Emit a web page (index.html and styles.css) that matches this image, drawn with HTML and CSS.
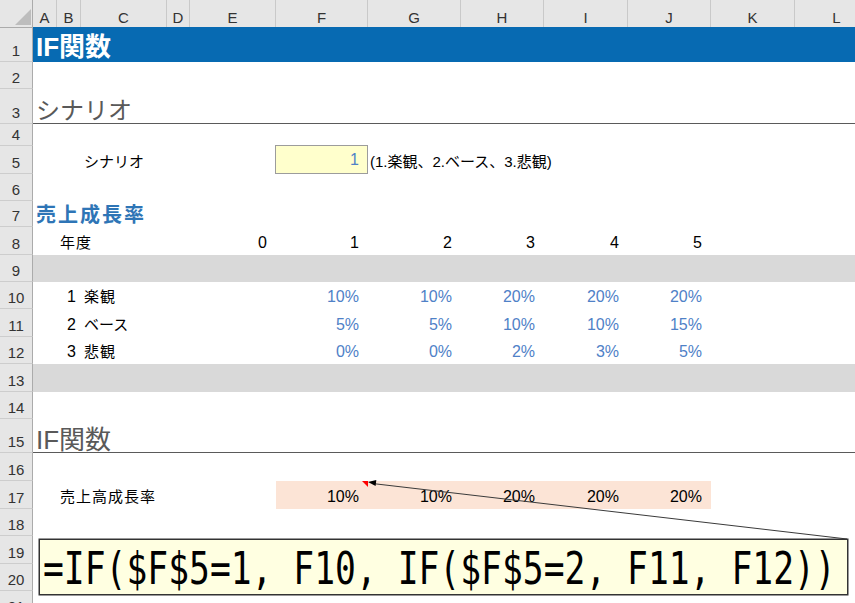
FILE: index.html
```html
<!DOCTYPE html>
<html lang="ja">
<head>
<meta charset="utf-8">
<title>IF関数</title>
<link rel="stylesheet" href="styles.css">
</head>
<body>
<div class="sheet">
  <div class="row hh">
    <div class="corner"><svg class="corner-tri" width="33" height="27" viewBox="0 0 33 27"><polygon points="31,9 31,25 15,25" fill="#bdbdbd"/></svg></div>
    <div class="ch">A</div><div class="ch">B</div><div class="ch">C</div><div class="ch">D</div><div class="ch">E</div><div class="ch">F</div><div class="ch">G</div><div class="ch">H</div><div class="ch">I</div><div class="ch">J</div><div class="ch">K</div><div class="ch">L</div>
  </div>
  <div class="row h35"><div class="rh">1</div><div class="cell title span">IF関数</div></div>
  <div class="row h27"><div class="rh">2</div></div>
  <div class="row h35"><div class="rh">3</div><div class="cell sec kana-sec span">シナリオ</div></div>
  <div class="row h22"><div class="rh">4</div></div>
  <div class="row h28"><div class="rh">5</div>
    <div class="cell jp kana cC">シナリオ</div>
    <div class="cell num input blue cF">1</div>
    <div class="cell note">(1.楽観、2.ベース、3.悲観)</div>
  </div>
  <div class="row h27"><div class="rh">6</div></div>
  <div class="row h26"><div class="rh">7</div><div class="cell subhead cA">売上成長率</div></div>
  <div class="row h28"><div class="rh">8</div>
    <div class="cell jp cB">年度</div>
    <div class="cell num cE">0</div>
    <div class="cell num cF">1</div>
    <div class="cell num cG">2</div>
    <div class="cell num cH">3</div>
    <div class="cell num cI">4</div>
    <div class="cell num cJ">5</div>
  </div>
  <div class="row h27"><div class="rh">9</div><div class="band span"></div></div>
  <div class="row h27"><div class="rh">10</div>
    <div class="cell num idx">1</div>
    <div class="cell jp cC">楽観</div>
    <div class="cell num blue cF">10%</div>
    <div class="cell num blue cG">10%</div>
    <div class="cell num blue cH">20%</div>
    <div class="cell num blue cI">20%</div>
    <div class="cell num blue cJ">20%</div>
  </div>
  <div class="row h28"><div class="rh">11</div>
    <div class="cell num idx">2</div>
    <div class="cell jp kana cC">ベース</div>
    <div class="cell num blue cF">5%</div>
    <div class="cell num blue cG">5%</div>
    <div class="cell num blue cH">10%</div>
    <div class="cell num blue cI">10%</div>
    <div class="cell num blue cJ">15%</div>
  </div>
  <div class="row h27"><div class="rh">12</div>
    <div class="cell num idx">3</div>
    <div class="cell jp cC">悲観</div>
    <div class="cell num blue cF">0%</div>
    <div class="cell num blue cG">0%</div>
    <div class="cell num blue cH">2%</div>
    <div class="cell num blue cI">3%</div>
    <div class="cell num blue cJ">5%</div>
  </div>
  <div class="row h28"><div class="rh">13</div><div class="band span"></div></div>
  <div class="row h27"><div class="rh">14</div></div>
  <div class="row h34"><div class="rh">15</div><div class="cell sec span">IF関数</div></div>
  <div class="row h28"><div class="rh">16</div></div>
  <div class="row h28"><div class="rh">17</div>
    <div class="cell jp cBwide">売上高成長率</div>
    <div class="cell num peach cF">10%</div>
    <div class="cell num peach cG">10%</div>
    <div class="cell num peach cH">20%</div>
    <div class="cell num peach cI">20%</div>
    <div class="cell num peach cJ">20%</div>
  </div>
  <div class="row h27"><div class="rh">18</div></div>
  <div class="row h28"><div class="rh">19</div></div>
  <div class="row h27"><div class="rh">20</div></div>
  <div class="row h27"><div class="rh">21</div></div>

  <svg class="connector" width="855" height="603" viewBox="0 0 855 603">
    <polygon points="362,481 368,481 368,487" fill="#ff0000"/>
    <line x1="374" y1="483.7" x2="847" y2="539" stroke="#3a3a3a" stroke-width="1"/>
    <polygon points="368,482 376.3,479.9 375.6,486" fill="#000"/>
  </svg>
  <div class="comment"><span class="formula">=IF($F$5=1, F10, IF($F$5=2, F11, F12))</span></div>
</div>
</body>
</html>
```

FILE: styles.css
```css
* {
  box-sizing: border-box;
  margin: 0;
  padding: 0;
}

html, body {
  width: 855px;
  height: 603px;
  overflow: hidden;
  background: #ffffff;
}

body {
  font-family: "Liberation Sans", "Noto Sans CJK JP", sans-serif;
  color: #000000;
}

.sheet {
  position: relative;
  width: 855px;
  height: 603px;
  overflow: hidden;
}

.row {
  display: grid;
  grid-template-columns: 33px 24px 24px 86px 23px 86px 92px 93px 83px 84px 83px 84px 84px;
  width: 879px;
}

.hh { height: 27px; }
.h22 { height: 22px; }
.h26 { height: 26px; }
.h27 { height: 27px; }
.h28 { height: 28px; }
.h34 { height: 34px; }
.h35 { height: 35px; }

.corner {
  position: relative;
  background: #e6e6e6;
  border-right: 1px solid #ababab;
  border-bottom: 1px solid #ababab;
}

.corner-tri {
  display: block;
}

.ch {
  background: #e6e6e6;
  border-bottom: 1px solid #ababab;
  border-right: 1px solid #c9c9c9;
  display: flex;
  align-items: flex-end;
  justify-content: center;
  font-size: 15px;
  line-height: 17px;
  padding-bottom: 1px;
  color: #333333;
}

.rh {
  background: #e6e6e6;
  border-right: 1px solid #ababab;
  border-bottom: 1px solid #cdcdcd;
  display: flex;
  align-items: flex-end;
  justify-content: center;
  font-size: 15px;
  line-height: 17px;
  padding-bottom: 2px;
  color: #333333;
}

.cell {
  display: flex;
  align-items: flex-end;
  white-space: nowrap;
  padding: 0 0 3px 3px;
  font-size: 16px;
  line-height: 18px;
}

.cA { grid-column: 2 / span 5; }
.cB { grid-column: 3 / span 2; }
.cBwide { grid-column: 3 / span 4; }
.cC { grid-column: 4; }
.cE { grid-column: 6; }
.cF { grid-column: 7; }
.cG { grid-column: 8; }
.cH { grid-column: 9; }
.cI { grid-column: 10; }
.cJ { grid-column: 11; }
.span { grid-column: 2 / -1; }

.num {
  justify-content: flex-end;
  padding-right: 9px;
}

.idx {
  grid-column: 3;
  padding-right: 5px;
}

.jp {
  font-size: 15px;
  letter-spacing: 1px;
}

.kana {
  letter-spacing: 0;
}

.blue {
  color: #4f81c7;
}

.title {
  background: #076ab2;
  color: #ffffff;
  font-size: 26px;
  font-weight: bold;
  line-height: 29px;
  padding-bottom: 0;
}

.sec {
  color: #595959;
  font-size: 26px;
  line-height: 24px;
  padding-bottom: 0;
  border-bottom: 1px solid #5a5a5a;
}

.kana-sec {
  font-size: 24px;
}

.subhead {
  color: #2e75b6;
  font-size: 20px;
  font-weight: bold;
  letter-spacing: 2px;
  line-height: 20px;
  padding-bottom: 2px;
}

.input {
  background: #ffffcc;
  border: 1px solid #9c9c9c;
  margin: -1px 0 0 -1px;
  padding-right: 8px;
  padding-bottom: 4px;
}

.note {
  grid-column: 8 / span 4;
  font-size: 15px;
  padding-left: 2px;
}

.band {
  background: #d9d9d9;
}

.peach {
  background: #fce4d6;
}

.connector {
  position: absolute;
  left: 0;
  top: 0;
  pointer-events: none;
}

.comment {
  position: absolute;
  left: 39px;
  top: 539px;
  width: 809px;
  height: 56px;
  background: #ffffe1;
  border: 1px solid #333333;
  box-shadow: 0 0 0 0.5px #333333;
  padding: 3px 0 0 3px;
  overflow: hidden;
  white-space: nowrap;
}

.formula {
  display: inline-block;
  font-family: "DejaVu Sans Mono", "Liberation Mono", monospace;
  font-size: 45px;
  line-height: 51px;
  transform: scaleX(0.77);
  transform-origin: left center;
  color: #000000;
}
```
